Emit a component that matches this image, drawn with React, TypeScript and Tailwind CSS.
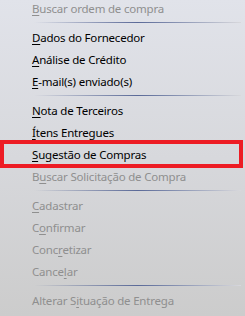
import React from "react";

type Item = {
    pre: string;
    key: string;
    post: string;
    disabled?: boolean;
    marked?: boolean;
};

type Entry = Item | "sep";

const entries: Entry[] = [
    { pre: "", key: "B", post: "uscar ordem de compra", disabled: true },
    "sep",
    { pre: "", key: "D", post: "ados do Fornecedor" },
    { pre: "", key: "A", post: "nálise de Crédito" },
    { pre: "", key: "E", post: "-mail(s) enviado(s)" },
    "sep",
    { pre: "", key: "N", post: "ota de Terceiros" },
    { pre: "", key: "Í", post: "tens Entregues" },
    { pre: "", key: "S", post: "ugestão de Compras", marked: true },
    { pre: "B", key: "u", post: "scar Solicitação de Compra", disabled: true },
    "sep",
    { pre: "", key: "C", post: "adastrar", disabled: true },
    { pre: "C", key: "o", post: "nfirmar", disabled: true },
    { pre: "Conc", key: "r", post: "etizar", disabled: true },
    { pre: "Cance", key: "l", post: "ar", disabled: true },
    "sep",
    { pre: "Alterar S", key: "i", post: "tuação de Entrega", disabled: true },
];

const MenuRow = ({ item }: { item: Item }) => (
    <div
        className={
            item.disabled
                ? "relative h-[22px] flex items-center pl-[32px] text-[#8f8f8f]"
                : "relative h-[22px] flex items-center pl-[32px] text-black"
        }
    >
        <span className="whitespace-pre pt-px">
            {item.pre}
            <span className="underline decoration-1 underline-offset-[2px]">{item.key}</span>
            {item.post}
        </span>
        {item.marked && (
            <div className="absolute left-0 right-[2px] top-[-3px] bottom-[-3px] border-4 border-[#ed1c24]" />
        )}
    </div>
);

const Separator = () => (
    <div className="h-[7px] flex items-center pl-[34px] pr-[4px]">
        <div className="h-px w-full bg-linear-to-r from-transparent via-[#5b6a98] to-[#d8d8dc]" />
    </div>
);

export default function App() {
    return (
        <div
            className="w-[245px] h-[316px] overflow-hidden bg-linear-to-b from-[#e1e3ea] via-[#d7d8dc] to-[#cccccc] text-[11.5px] tracking-[-0.2px] leading-none"
            style={{ fontFamily: '"Noto Sans", "Open Sans", sans-serif' }}
        >
            <div className="-mt-[3px]">
                {entries.map((e, i) =>
                    e === "sep" ? <Separator key={i} /> : <MenuRow key={i} item={e} />
                )}
            </div>
        </div>
    );
}
